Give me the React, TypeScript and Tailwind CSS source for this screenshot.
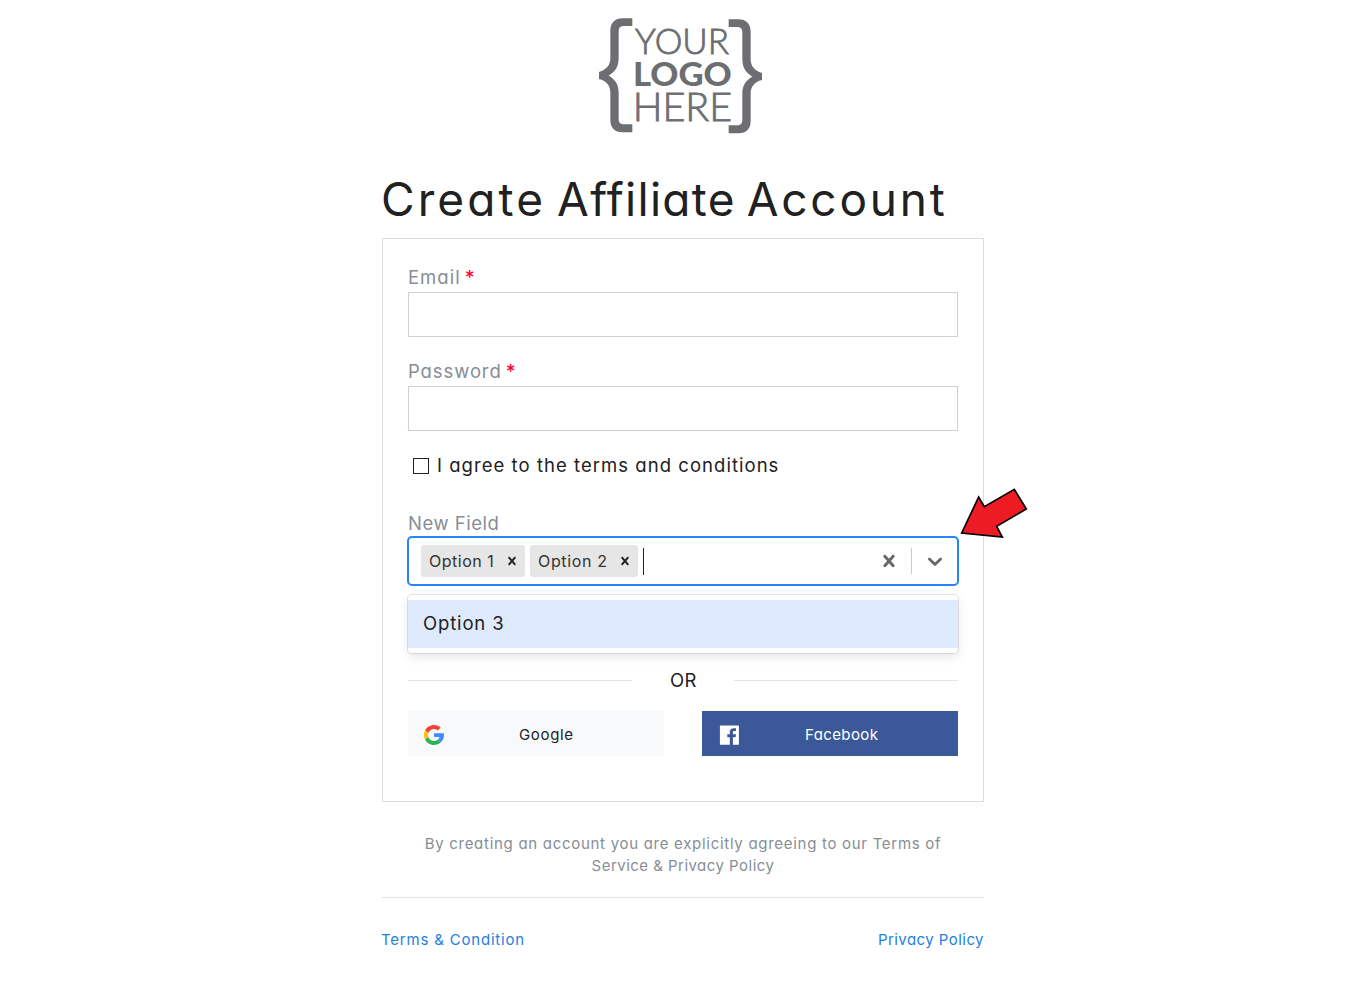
import type { ReactNode } from "react";

const brace =
  "M157 40H128C104 40 91 54 91 78V160C91 180 80 194 57 201V222C80 228 91 242 91 262V345C91 368 104 382 128 382H157V358H132C121 358 116 352 116 342V262C116 238 105 222 86 212C105 200 116 186 116 160V78C116 68 121 63 132 63H157Z";

function Logo() {
  return (
    <svg viewBox="54 36 498 354" className="ml-[216px] h-[118px] w-[166px] shrink-0" fill="#6d6e71" fontFamily="Lato, sans-serif">
      <path d={brace} />
      <path d={brace} transform="translate(603 3) scale(-1 1)" />
      <text x="165" y="148" fontSize="104" fontWeight="300" textLength="282" lengthAdjust="spacingAndGlyphs" stroke="#6d6e71" strokeWidth="2.5">YOUR</text>
      <text x="159" y="242" fontSize="99" fontWeight="900" textLength="296" lengthAdjust="spacingAndGlyphs">LOGO</text>
      <text x="158" y="348" fontSize="117" fontWeight="300" textLength="298" lengthAdjust="spacingAndGlyphs" stroke="#6d6e71" strokeWidth="2.5">HERE</text>
    </svg>
  );
}

function Cross({ className }: { className: string }) {
  return (
    <svg viewBox="0 0 20 20" className={className} fill="currentColor">
      <path d="M14.348 14.849c-0.469 0.469-1.229 0.469-1.697 0l-2.651-3.030-2.651 3.029c-0.469 0.469-1.229 0.469-1.697 0-0.469-0.469-0.469-1.229 0-1.697l2.758-3.15-2.759-3.152c-0.469-0.469-0.469-1.228 0-1.697s1.228-0.469 1.697 0l2.652 3.031 2.651-3.031c0.469-0.469 1.228-0.469 1.697 0s0.469 1.229 0 1.697l-2.758 3.152 2.758 3.15c0.469 0.469 0.469 1.229 0 1.698z" />
    </svg>
  );
}

function Chevron() {
  return (
    <svg viewBox="0 0 20 20" className="h-6 w-6" fill="currentColor">
      <path d="M4.516 7.548c0.436-0.446 1.043-0.481 1.576 0l3.908 3.747 3.908-3.747c0.533-0.481 1.141-0.446 1.574 0 0.436 0.445 0.408 1.197 0 1.615-0.406 0.418-4.695 4.502-4.695 4.502-0.217 0.223-0.502 0.335-0.787 0.335s-0.57-0.112-0.789-0.335c0 0-4.287-4.084-4.695-4.502s-0.436-1.17 0-1.615z" />
    </svg>
  );
}

function GoogleIcon() {
  return (
    <svg viewBox="0 0 48 48" className="h-5 w-5">
      <path fill="#f44336" d="M24 9.5c3.5 0 6.7 1.2 9.2 3.6l6.9-6.9C35.9 2.4 30.5 0 24 0 14.6 0 6.5 5.4 2.6 13.2l8 6.2C12.4 13.7 17.7 9.5 24 9.5z" />
      <path fill="#448aff" d="M47.5 20H24v9h12.9c-.6 3-2.2 5.5-4.7 7.2l7.7 6C44.4 38 48 31.8 48 24.6c0-1.6-.2-3.1-.5-4.6z" />
      <path fill="#ffc107" d="M10.5 28.6a14.5 14.5 0 0 1 0-9.2l-8-6.2a24 24 0 0 0 0 21.6l8-6.2z" />
      <path fill="#2bb24c" d="M24 48c6.5 0 11.9-2.1 15.9-5.8l-7.7-6c-2.2 1.5-4.9 2.3-8.2 2.3-6.3 0-11.6-4.2-13.5-9.9l-8 6.2C6.5 42.6 14.6 48 24 48z" />
    </svg>
  );
}

function FacebookIcon() {
  return (
    <svg viewBox="0 0 20 20" className="h-5 w-5">
      <path fill="#fff" d="M1.4.4h18a.5.5 0 0 1 .5.5v18.3a.5.5 0 0 1-.5.5h-5.5v-7.5h2.7l.4-2.9h-3.100V7.500c0-.9.3-1.500 1.500-1.500h1.600V3.300c-.3 0-1.200-.1-2.300-.1-2.400 0-3.900 1.400-3.900 3.900v2.200H8.300v2.900h2.500v7.500H1.400a.5.5 0 0 1-.5-.5V.9a.5.5 0 0 1 .5-.5z" />
    </svg>
  );
}

function Label({ children, required }: { children: ReactNode; required?: boolean }) {
  return (
    <label className="flex h-[29px] items-start leading-7 text-[#868e96]">
      {children}
      {required && <span className="ml-1 mt-px text-[19px] font-medium text-[#ff0033]">*</span>}
    </label>
  );
}

function Tag({ children, className }: { children: ReactNode; className: string }) {
  return (
    <div className={`flex h-8 items-center rounded-[3px] bg-[#e6e6e6] pl-2 text-base text-[#333] ${className}`}>
      <span className="flex-1 whitespace-nowrap leading-8">{children}</span>
      <Cross className="mr-[5px] h-4 w-4 text-[#212121]" />
    </div>
  );
}

export default function App() {
  return (
    <div className="min-h-[1003px] bg-white pt-[17px] font-['Inter',sans-serif] text-[18.5px] text-[#212121] [font-feature-settings:'cv11']">
      <main className="ml-[382px] flex w-[602px] flex-col">
        <Logo />
        <h1 className="-ml-px mt-[34px] whitespace-nowrap text-[46px] leading-[60px] [word-spacing:-2px]">
          <span className="tracking-[3.1px]">Create</span>{" "}
          <span className="tracking-[1.3px]">Affiliate</span>{" "}
          <span className="tracking-[2.8px]">Account</span>
        </h1>

        <form className="mt-[9px] flex h-[564px] flex-col border border-[#dcdcdf] px-[25px] pt-6">
          <Label required><span className="tracking-[1px]">Email</span></Label>
          <input className="mb-5 h-[45px] shrink-0 border border-[#ced0da] outline-none" />
          <Label required><span className="tracking-[0.9px]">Password</span></Label>
          <input type="password" className="mb-5 h-[45px] shrink-0 border border-[#ced0da] outline-none" />

          <label className="flex h-7 items-center pl-[5px] leading-7">
            <span className="mt-[2px] h-4 w-4 border border-[#212121] bg-white" />
            <span className="ml-2 whitespace-nowrap tracking-[1.04px]">I agree to the terms and conditions</span>
          </label>

          <div className="mt-[30px] h-[27px] leading-7 tracking-[0.5px] text-[#868e96]">New Field</div>
          <div className="relative -mx-px">
            <div className="flex h-[50px] items-center rounded-[5px] border-2 border-[#2684ff] bg-white pl-3">
              <Tag className="w-[104px] tracking-[0.5px]">Option 1</Tag>
              <Tag className="ml-[5px] w-[108px] tracking-[0.65px]">Option 2</Tag>
              <span className="ml-[5px] h-[27px] w-px bg-[#212121]" />
              <div className="ml-auto flex items-center text-[#666]">
                <Cross className="mr-[10.500px] h-6 w-6" />
                <span className="h-[26px] w-px bg-[#ccc]" />
                <span className="ml-[10.5px] mr-[10.5px]"><Chevron /></span>
              </div>
            </div>
            <div className="absolute inset-x-px top-[59px] z-10 rounded bg-white py-[5px] shadow-[0_0_0_1px_hsla(0,0%,0%,0.1),0_4px_11px_hsla(0,0%,0%,0.1)]">
              <div className="h-12 bg-[#deebff] pl-[15px] leading-[47px] tracking-[0.85px]">Option 3</div>
            </div>
            <svg viewBox="330 22 205 157" className="absolute -top-[49px] left-[553px] z-20 h-[52.33px] w-[68.33px]">
              <path d="M335 160L386 52L403 81L493 29L529 88L440 140L457 172Z" fill="#ed1c24" stroke="#000" strokeWidth="5" />
            </svg>
          </div>

          <div className="mt-20 flex h-7 items-center justify-between leading-7">
            <span className="h-px w-56 bg-[#e4e4e6]" />
            <span className="pl-px tracking-[0.5px]">OR</span>
            <span className="h-px w-56 bg-[#e4e4e6]" />
          </div>

          <div className="mt-[17px] flex justify-between text-[15px]">
            <button type="button" className="flex h-[45px] w-64 items-center bg-[#f8f9fb] pl-4">
              <span className="mt-[3px]"><GoogleIcon /></span>
              <span className="ml-[75px] mt-1 tracking-[0.65px]">Google</span>
            </button>
            <button type="button" className="flex h-[45px] w-64 items-center bg-[#3b5998] pl-[17px] text-white">
              <span className="mt-[3px]"><FacebookIcon /></span>
              <span className="ml-[66px] mt-1 tracking-[0.4px]">Facebook</span>
            </button>
          </div>
        </form>

        <footer className="mt-[31px] text-[15px] leading-[22px]">
          <p className="text-center text-[#868e96]">
            <span className="block whitespace-nowrap tracking-[0.71px]">By creating an account you are explicitly agreeing to our Terms of</span>
            <span className="block tracking-[0.47px]">Service &amp; Privacy Policy</span>
          </p>
          <hr className="mt-5 border-[#e2e2e2]" />
          <div className="mt-[31px] flex justify-between text-[#2680e3]">
            <a className="-ml-px tracking-[0.8px]">Terms &amp; Condition</a>
            <a className="tracking-[0.45px]">Privacy Policy</a>
          </div>
        </footer>
      </main>
    </div>
  );
}
